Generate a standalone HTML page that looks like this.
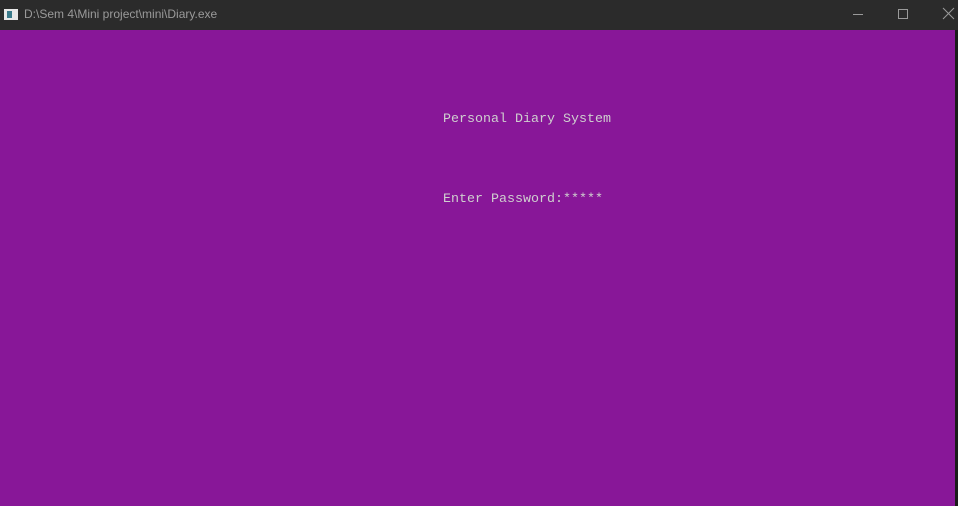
<!DOCTYPE html>
<html><head><meta charset="utf-8"><style>
html,body{margin:0;padding:0;width:958px;height:506px;overflow:hidden;background:#881798;}
.tb{position:absolute;left:0;top:0;width:958px;height:30px;background:#2b2b2b;}
.tt{position:absolute;left:24px;top:7px;font:12px "Liberation Sans",sans-serif;color:#9a9a9a;}
.ic{position:absolute;left:4px;top:9px;width:14px;height:11px;background:#e8e8e8;}
.ic:after{content:"";position:absolute;left:3px;top:2px;width:5px;height:7px;background:#3a7a8a;}
.strip{position:absolute;left:955px;top:30px;width:3px;height:476px;background:#1b1b1b;}
.t{position:absolute;font:13.33px "Liberation Mono",monospace;color:#cfcfcf;white-space:pre;}
</style></head><body>
<div class="tb">
<div class="ic"></div>
<div class="tt">D:\Sem 4\Mini project\mini\Diary.exe</div>
<svg style="position:absolute;left:852px;top:8px" width="12" height="12"><line x1="1" y1="6.5" x2="11" y2="6.5" stroke="#9a9a9a"/></svg>
<svg style="position:absolute;left:897px;top:8px" width="12" height="12"><rect x="1.5" y="1.5" width="9" height="9" fill="none" stroke="#9a9a9a"/></svg>
<svg style="position:absolute;left:942px;top:7px" width="14" height="14"><path d="M1 1L12 12M12 1L1 12" stroke="#9a9a9a"/></svg>
</div>
<div class="strip"></div>
<div class="t" style="left:443px;top:112px">Personal Diary System</div>
<div class="t" style="left:443px;top:192px">Enter Password:*****</div>
</body></html>
